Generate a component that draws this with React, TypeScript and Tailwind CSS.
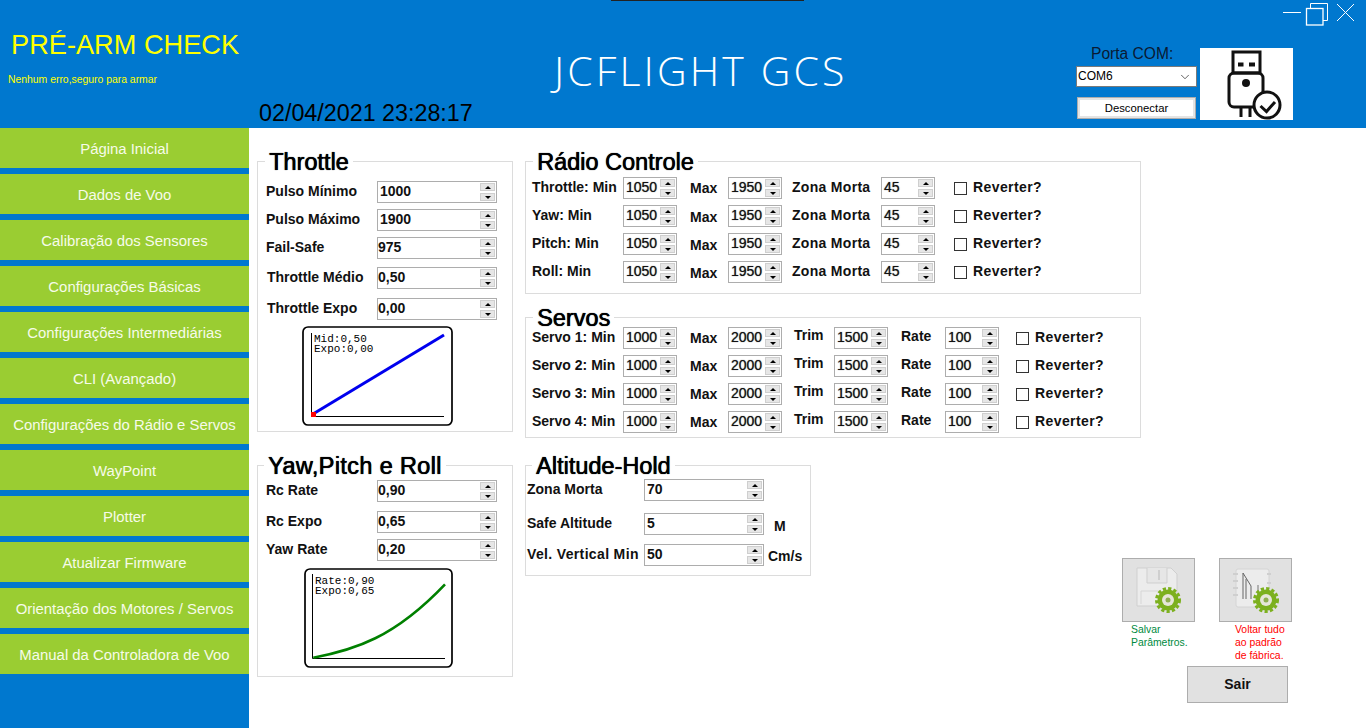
import React from 'react';
import { ChevronDown } from 'lucide-react';

const menuItems = [
    'Página Inicial',
    'Dados de Voo',
    'Calibração dos Sensores',
    'Configurações Básicas',
    'Configurações Intermediárias',
    'CLI (Avançado)',
    'Configurações do Rádio e Servos',
    'WayPoint',
    'Plotter',
    'Atualizar Firmware',
    'Orientação dos Motores / Servos',
    'Manual da Controladora de Voo',
];

const Spin: React.FC<{ value: string; className?: string; bold?: boolean; tight?: boolean }> = ({ value, className = 'w-[120px]', bold = true, tight = false }) => (
    <div className={`flex h-[22px] shrink-0 items-center justify-between border border-[#adadad] bg-white pr-px ${tight ? '' : 'pl-[2px]'} ${className}`}>
        <span className={`-mt-[2px] text-[14px] leading-none text-[#111] ${bold ? 'font-bold' : '[text-shadow:0_0_1px_#555]'}`}>{value}</span>
        <div className="flex w-[15px] flex-col gap-[2px]">
            <div className="flex h-[8px] items-center justify-center border border-[#cfcfcf] bg-[#e6e6e6]">
                <div className="h-0 w-0 border-x-[3px] border-b-[3px] border-x-transparent border-b-black" />
            </div>
            <div className="flex h-[8px] items-center justify-center border border-[#cfcfcf] bg-[#e6e6e6]">
                <div className="h-0 w-0 border-x-[3px] border-t-[3px] border-x-transparent border-t-black" />
            </div>
        </div>
    </div>
);

const GroupBox: React.FC<{ title: string; titleClass: string; className: string; children: React.ReactNode }> = ({ title, titleClass, className, children }) => (
    <div className={`relative shrink-0 border border-[#dcdcdc] ${className}`}>
        <div className={`absolute -top-[13px] whitespace-nowrap bg-white px-[4px] text-[23.5px] leading-[26px] text-black [text-shadow:0.4px_0_0_#000,0_0_1px_#222] ${titleClass}`}>{title}</div>
        {children}
    </div>
);

const Check = () => <div className="h-[13px] w-[13px] shrink-0 border border-[#333] bg-white" />;

const Lbl: React.FC<{ className?: string; up?: string; children: React.ReactNode }> = ({ className = '', up = '-top-px', children }) => (
    <span className={`relative shrink-0 whitespace-nowrap text-[14px] font-bold leading-none text-[#111] ${up} ${className}`}>{children}</span>
);

const radioRows = ['Throttle: Min', 'Yaw: Min', 'Pitch: Min', 'Roll: Min'];
const servoRows = ['Servo 1: Min', 'Servo 2: Min', 'Servo 3: Min', 'Servo 4: Min'];

const Gear: React.FC<{ cx: number; cy: number }> = ({ cx, cy }) => (
    <g>
        <circle cx={cx} cy={cy} r="10.5" fill="#7cb01e" />
        <circle cx={cx} cy={cy} r="11.5" fill="none" stroke="#7cb01e" strokeWidth="3" strokeDasharray="3.2 2.2" />
        <circle cx={cx} cy={cy} r="6" fill="#e6e6d8" />
        <circle cx={cx} cy={cy} r="2.5" fill="#8fae50" />
    </g>
);

const App: React.FC = () => {
    return (
        <div className="relative flex h-screen w-screen flex-col overflow-hidden bg-white font-['Liberation_Sans',Arial,sans-serif]">
            {/* Title bar */}
            <header className="relative flex h-[128px] shrink-0 bg-[#0078cf]">
                <div className="absolute left-[611px] top-0 h-px w-[193px] bg-[#222]" />
                <div className="w-[249px] shrink-0 pl-[12px] pt-[29px]">
                    <h1 className="-ml-px whitespace-nowrap text-[27.2px] leading-[31px] text-[#ffff00]">PRÉ-ARM CHECK</h1>
                    <p className="-ml-[4px] mt-[13px] text-[10.4px] leading-[13px] text-[#ffff00]">Nenhum erro,seguro para armar</p>
                </div>
                <div className="flex w-[305px] shrink-0 items-end pb-px pl-[10px]">
                    <span className="text-[23.3px] leading-[27px] text-black">02/04/2021 23:28:17</span>
                </div>
                <div className="w-[522px] shrink-0 pt-[46px]">
                    <span className="whitespace-nowrap font-['Open_Sans',sans-serif] text-[41px] font-light leading-[48px] tracking-[3.1px] text-white">JCFLIGHT GCS</span>
                </div>
                <div className="flex flex-1 gap-[3px] pt-[48px]">
                    <div className="w-[121px]">
                        <div className="pl-[15px] text-[15.6px] leading-[12px] text-[#0a1a33]">Porta COM:</div>
                        <div className="mt-[6px] flex h-[21px] items-center justify-between border border-[#7a7a7a] bg-white pl-px pr-[4px]">
                            <span className="-mt-[2px] text-[12px] text-black">COM6</span>
                            <ChevronDown size={14} strokeWidth={1.2} className="text-[#222]" />
                        </div>
                        <div className="ml-px mt-[10px] flex h-[22px] w-[119px] items-center justify-center border border-[#adadad] bg-white shadow-[inset_0_0_0_2px_#e4e4e4]">
                            <span className="text-[11.3px] text-black">Desconectar</span>
                        </div>
                    </div>
                    <div className="h-[72px] w-[93px] bg-white">
                        <svg width="93" height="72" viewBox="0 0 93 72" fill="none" stroke="#111">
                            <rect x="33" y="4" width="27" height="21" strokeWidth="3" />
                            <rect x="38" y="14.5" width="5.5" height="4" fill="#111" stroke="none" />
                            <rect x="49" y="14.5" width="6" height="4" fill="#111" stroke="none" />
                            <rect x="29" y="25" width="34" height="34" rx="5" strokeWidth="3" />
                            <circle cx="46" cy="35" r="4" fill="#111" stroke="none" />
                            <path d="M41 59V69M50 59V69" strokeWidth="3" />
                            <circle cx="67" cy="57" r="13" fill="#fff" strokeWidth="3" />
                            <path d="M60.5 58L66.5 63.5L75 54" strokeWidth="3" />
                        </svg>
                    </div>
                </div>
                {/* window buttons */}
                <svg className="absolute right-[12px] top-0" width="71" height="26" viewBox="0 0 71 26" fill="none" stroke="#fff">
                    <path d="M0 12.5H18" />
                    <path d="M27.5 8V3.5H44.5V20.5H40" />
                    <rect x="23.5" y="8.5" width="16.5" height="16.5" strokeWidth="1.3" />
                    <path d="M54 4L71 21M71 4L54 21" />
                </svg>
            </header>

            <div className="flex min-h-0 flex-1">
                {/* Side menu */}
                <nav className="flex w-[249px] shrink-0 flex-col gap-[6px] bg-[#0078cf]">
                    {menuItems.map((item) => (
                        <div key={item} className="flex h-[40px] shrink-0 items-center justify-center whitespace-nowrap bg-[#9acd32] pt-[2px] text-[14.9px] text-[#f6fbe9]">
                            {item}
                        </div>
                    ))}
                </nav>

                <main className="flex flex-1 gap-[12px] pl-[8px] pt-[33px]">
                    {/* Left column */}
                    <div className="w-[256px] shrink-0">
                        <GroupBox title="Throttle" titleClass="left-[7px]" className="h-[271px] w-[256px] pl-[8px] pt-[19px]">
                            <div className="flex flex-col">
                                <div className="flex items-center"><Lbl className="w-[111px]">Pulso Mínimo</Lbl><Spin value="1000" /></div>
                                <div className="mt-[6px] flex items-center"><Lbl className="w-[111px]">Pulso Máximo</Lbl><Spin value="1900" /></div>
                                <div className="mt-[6px] flex items-center"><Lbl className="w-[111px]">Fail-Safe</Lbl><Spin value="975" tight /></div>
                                <div className="mt-[8px] flex items-center"><Lbl className="w-[111px] pl-px">Throttle Médio</Lbl><Spin value="0,50" tight /></div>
                                <div className="mt-[9px] flex items-center"><Lbl className="w-[111px] pl-px">Throttle Expo</Lbl><Spin value="0,00" tight /></div>
                            </div>
                            <svg className="ml-[36px] mt-[6px] block" width="151" height="100" viewBox="0 0 151 100" fill="none">
                                <rect x="1" y="1" width="149" height="98" rx="5" stroke="#000" strokeWidth="1.7" />
                                <path d="M9.5 7V90.5H142" stroke="#000" />
                                <path d="M11 88L142 9" stroke="#0000ee" strokeWidth="3" />
                                <rect x="9" y="86" width="5" height="5" fill="#f00" />
                                <text x="12" y="16" fontFamily="Liberation Mono" fontSize="11" fill="#000">Mid:0,50</text>
                                <text x="12" y="26" fontFamily="Liberation Mono" fontSize="11" fill="#000">Expo:0,00</text>
                            </svg>
                        </GroupBox>
                        <GroupBox title="Yaw,Pitch e Roll" titleClass="left-[6px] tracking-[0.35px]" className="mt-[33px] h-[212px] w-[256px] pl-[8px] pt-[14px]">
                            <div className="flex items-center"><Lbl className="w-[111px]">Rc Rate</Lbl><Spin value="0,90" tight /></div>
                            <div className="mt-[9px] flex items-center"><Lbl className="w-[111px]">Rc Expo</Lbl><Spin value="0,65" tight /></div>
                            <div className="mt-[6px] flex items-center"><Lbl className="w-[111px]">Yaw Rate</Lbl><Spin value="0,20" tight /></div>
                            <svg className="ml-[38px] mt-[7px] block" width="149" height="100" viewBox="0 0 149 100" fill="none">
                                <rect x="1" y="1" width="147" height="98" rx="5" stroke="#000" strokeWidth="1.7" />
                                <path d="M8.5 6V90.5H141" stroke="#000" />
                                <path d="M9.3 89.7C50 82 90 70 141 16.3" stroke="#008000" strokeWidth="2.6" />
                                <text x="11" y="16" fontFamily="Liberation Mono" fontSize="11" fill="#000">Rate:0,90</text>
                                <text x="11" y="26" fontFamily="Liberation Mono" fontSize="11" fill="#000">Expo:0,65</text>
                            </svg>
                        </GroupBox>
                    </div>

                    {/* Right column */}
                    <div className="flex-1">
                        <GroupBox title="Rádio Controle" titleClass="left-[7px]" className="h-[133px] w-[616px] pl-[6px] pt-[15px]">
                            <div className="flex flex-col gap-[6px]">
                                {radioRows.map((label, i) => (
                                    <div key={label} className="flex items-center">
                                        <Lbl className="w-[91px]">{label}</Lbl>
                                        <Spin value="1050" className="w-[54px]" bold={false} />
                                        <Lbl className="w-[51px] pl-[13px]" up={i === 0 ? 'top-0' : 'top-px'}>Max</Lbl>
                                        <Spin value="1950" className="w-[54px]" bold={false} />
                                        <Lbl className="w-[99px] pl-[10px] tracking-[0.3px]">Zona Morta</Lbl>
                                        <Spin value="45" className="w-[54px]" bold={false} />
                                        <div className="ml-[19px]"><Check /></div>
                                        <Lbl className="ml-[6px] tracking-[0.4px]">Reverter?</Lbl>
                                    </div>
                                ))}
                            </div>
                        </GroupBox>
                        <GroupBox title="Servos" titleClass="left-[7px]" className="mt-[23px] h-[121px] w-[616px] pl-[6px] pt-[9px]">
                            <div className="flex flex-col gap-[6px]">
                                {servoRows.map((label) => (
                                    <div key={label} className="flex items-center">
                                        <Lbl className="w-[91px]">{label}</Lbl>
                                        <Spin value="1000" className="w-[54px]" bold={false} />
                                        <Lbl className="w-[51px] pl-[13px]" up="top-0">Max</Lbl>
                                        <Spin value="2000" className="w-[54px]" bold={false} />
                                        <Lbl className="w-[52px] pl-[12px]" up="-top-[3px]">Trim</Lbl>
                                        <Spin value="1500" className="w-[54px]" bold={false} />
                                        <Lbl className="w-[57px] pl-[13px]" up="-top-[2px]">Rate</Lbl>
                                        <Spin value="100" className="w-[54px]" bold={false} />
                                        <div className="ml-[17px]"><Check /></div>
                                        <Lbl className="ml-[6px] tracking-[0.4px]">Reverter?</Lbl>
                                    </div>
                                ))}
                            </div>
                        </GroupBox>
                        <div className="mt-[27px] flex items-start">
                            <GroupBox title="Altitude-Hold" titleClass="left-[6px]" className="h-[111px] w-[286px] pl-px pt-[13px]">
                                <div className="flex items-center"><Lbl className="w-[117px]">Zona Morta</Lbl><Spin value="70" /></div>
                                <div className="mt-[12px] flex items-center"><Lbl className="w-[117px]">Safe Altitude</Lbl><Spin value="5" /><Lbl className="ml-[10px]" up="top-[2px]">M</Lbl></div>
                                <div className="mt-[9px] flex items-center"><Lbl className="w-[117px] tracking-[0.35px]">Vel. Vertical Min</Lbl><Spin value="50" /><Lbl className="ml-[4px]" up="top-px">Cm/s</Lbl></div>
                            </GroupBox>
                            {/* Save / reset / exit */}
                            <div className="ml-[311px] mt-[93px] w-[170px]">
                                <div className="flex gap-[24px]">
                                    <div className="w-[73px]">
                                        <div className="h-[64px] border border-[#adadad] bg-[#e1e1e1]">
                                            <svg width="71" height="62" viewBox="0 0 71 62" fill="none">
                                                <path d="M14 9H48L54 15V47H14Z" fill="#ececec" stroke="#cfcfcf" />
                                                <path d="M24 9V24H44V9" stroke="#cfcfcf" fill="#e6e6e6" />
                                                <path d="M36 11V21" stroke="#cfcfcf" strokeWidth="2" />
                                                <path d="M18 45V32H38" stroke="#d6d6d6" />
                                                <Gear cx={45} cy={41} />
                                            </svg>
                                        </div>
                                        <p className="h-[44px] whitespace-nowrap pl-[9px] pt-px text-[10.4px] leading-[13px] text-[#008a3e]">Salvar<br />Parâmetros.</p>
                                    </div>
                                    <div className="w-[73px]">
                                        <div className="h-[64px] border border-[#adadad] bg-[#e1e1e1]">
                                            <svg width="71" height="62" viewBox="0 0 71 62" fill="none">
                                                <rect x="16" y="10" width="33" height="38" rx="2" fill="#ececec" stroke="#d4d4d4" />
                                                <path d="M13 15H18M13 22H18M13 29H18M13 36H18M47 15H51M47 24H51" stroke="#cfcfcf" strokeWidth="2" />
                                                <path d="M23 14L31 27V40M23 14V40M26 20V40" stroke="#666" />
                                                <path d="M38 26V38" stroke="#777" />
                                                <Gear cx={46} cy={41} />
                                            </svg>
                                        </div>
                                        <p className="h-[44px] whitespace-nowrap pl-[16px] pt-px text-[10.4px] leading-[13px] text-[#ff0000]">Voltar tudo<br />ao padrão<br />de fábrica.</p>
                                    </div>
                                </div>
                                <div className="ml-[65px] flex h-[37px] w-[101px] items-center justify-center border border-[#adadad] bg-[#e1e1e1] text-[14px] font-bold text-[#111]">Sair</div>
                            </div>
                        </div>
                    </div>
                </main>
            </div>
        </div>
    );
};

export default App;
